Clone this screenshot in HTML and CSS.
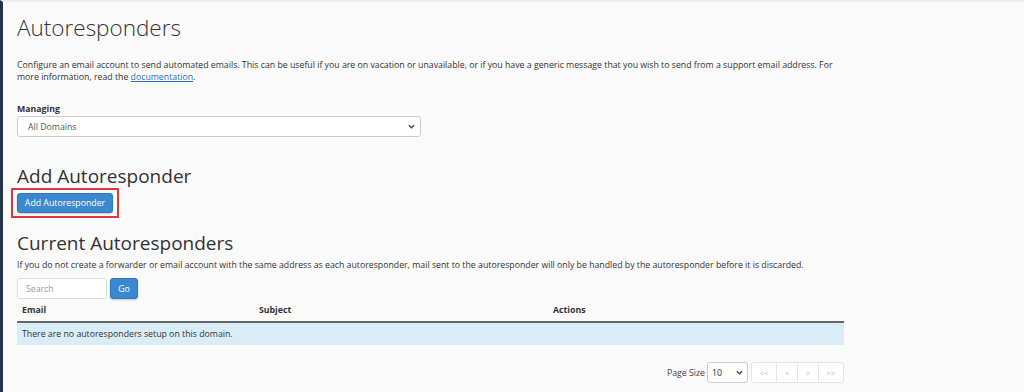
FILE: index.html
```html
<!DOCTYPE html>
<html>
<head>
<meta charset="utf-8">
<link rel="stylesheet" href="styles.css">
</head>
<body>
<div class="page">
  <h1 class="title">Autoresponders</h1>
  <p class="desc">Configure an email account to send automated emails. This can be useful if you are on vacation or unavailable, or if you have a generic message that you wish to send from a support email address. For more information, read the <a href="#">documentation</a>.</p>
  <label class="label">Managing</label>
  <div class="select wide"><span>All Domains</span><svg class="chev" viewBox="0 0 8 5" width="7" height="5"><path d="M1 1l3 3 3-3" fill="none" stroke="#444" stroke-width="1.5"/></svg></div>

  <h2 class="h2 first">Add Autoresponder</h2>
  <div class="hl"><button class="btn">Add Autoresponder</button></div>

  <h2 class="h2 second">Current Autoresponders</h2>
  <p class="desc2">If you do not create a forwarder or email account with the same address as each autoresponder, mail sent to the autoresponder will only be handled by the autoresponder before it is discarded.</p>
  <div class="search">
    <div class="input">Search</div>
    <button class="btn go">Go</button>
  </div>
  <div class="table">
    <div class="thead">
      <div>Email</div><div>Subject</div><div>Actions</div>
    </div>
    <div class="row">There are no autoresponders setup on this domain.</div>
  </div>
  <div class="pager">
    <span class="ps">Page Size</span>
    <div class="select small"><span>10</span><svg class="chev" viewBox="0 0 8 5" width="7" height="5"><path d="M1 1l3 3 3-3" fill="none" stroke="#444" stroke-width="1.5"/></svg></div>
    <div class="pbtns"><span class="pw">&lt;&lt;</span><span>&lt;</span><span>&gt;</span><span class="pw">&gt;&gt;</span></div>
  </div>
</div>
</body>
</html>
```

FILE: styles.css
```css
html, body {
  margin: 0;
  padding: 0;
  background: #fafafa;
}
body {
  font-family: "Open Sans", "Liberation Sans", sans-serif;
  color: #333;
  height: 392px;
  overflow: hidden;
  border-left: 3px solid #25324d;
  border-top: 2px solid #eeeeee;
  box-sizing: border-box;
}
.page {
  width: 827px;
  padding-left: 14px;
  display: flex;
  flex-direction: column;
  align-items: flex-start;
  font-size: 8.75px;
  line-height: 12px;
}
.title {
  font-weight: 300;
  font-size: 22.5px;
  line-height: 27px;
  margin: 12px 0 0 0;
  color: #333;
}
.desc {
  margin: 18px 0 0 0;
  width: 827px;
}
.desc a { color: #2a6fb8; }
.label {
  font-weight: 700;
  margin-top: 20px;
}
.select {
  display: flex;
  align-items: center;
  justify-content: space-between;
  box-sizing: border-box;
  background: #fff;
  border: 1px solid #ccc;
  border-radius: 3px;
  color: #555;
}
.wide {
  width: 404px;
  height: 21px;
  margin-top: 1px;
  padding: 0 5px 0 10px;
}
.h2 {
  font-size: 19px;
  font-weight: 400;
  line-height: 23px;
  margin: 0;
  color: #333;
}
.first { margin-top: 28px; }
.hl {
  border: 2px solid #e2363c;
  padding: 3px 4px;
  margin-left: -6px;
}
.btn {
  font-family: inherit;
  background: #3a88d0;
  color: #fff;
  border: 1px solid #2f78bd;
  border-radius: 3px;
  font-size: 8.75px;
  height: 20px;
  width: 96px;
  padding: 0;
  box-shadow: 0 1px 2px rgba(0,0,0,0.2);
}
.second { margin-top: 14px; }
.desc2 {
  margin: 4px 0 0 0;
}
.search {
  display: flex;
  gap: 3px;
  margin-top: 7px;
}
.input {
  box-sizing: border-box;
  width: 90px;
  height: 21px;
  background: #fff;
  border: 1px solid #ddd;
  border-radius: 3px;
  color: #999;
  padding: 0 8px;
  display: flex;
  align-items: center;
}
.go {
  width: 28px;
  height: 21px;
}
.table {
  width: 827px;
  margin-top: 0;
}
.thead {
  display: grid;
  grid-template-columns: 237px 294px 1fr;
  border-bottom: 2px solid #666;
  font-weight: 700;
  height: 22px;
  align-items: center;
}
.thead div { padding-left: 5px; }
.row {
  background: #d9edf7;
  height: 22px;
  display: flex;
  align-items: center;
  padding-left: 5px;
}
.pager {
  align-self: flex-end;
  display: flex;
  align-items: center;
  margin-top: 17px;
}
.ps { margin-right: 2px; color: #444; }
.small {
  width: 41px;
  height: 21px;
  padding: 0 4px 0 4px;
  color: #333;
}
.pbtns {
  display: flex;
  margin-left: 3px;
  border: 1px solid #e4e4e4;
  border-radius: 3px;
  background: #fff;
  height: 21px;
  box-sizing: border-box;
}
.pbtns span {
  width: 20px;
  display: flex;
  align-items: center;
  justify-content: center;
  color: #bbb;
  border-left: 1px solid #e8e8e8;
  font-size: 8px;
}
.pbtns span:first-child { border-left: none; }
.pbtns .pw { width: 24px; }
```
